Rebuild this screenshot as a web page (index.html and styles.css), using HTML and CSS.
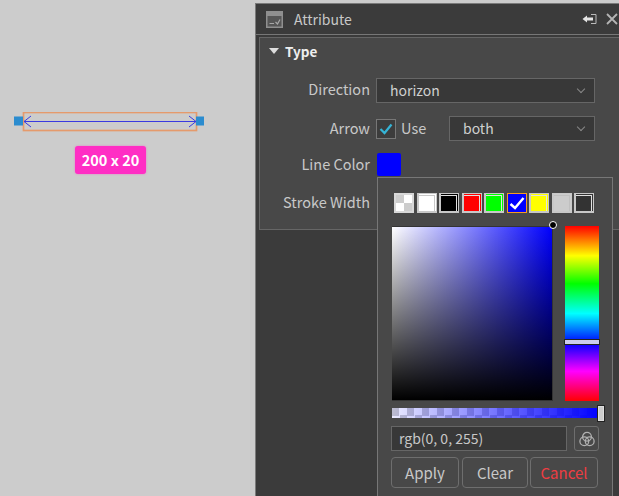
FILE: index.html
```html
<!DOCTYPE html>
<html lang="en">
<head>
    <meta charset="UTF-8">
    <meta name="viewport" content="width=device-width, initial-scale=1.0">
    <link rel="stylesheet" href="styles.css">
</head>
<body>
    <div class="canvas">
        <div class="shape">
            <svg width="192" height="20" viewBox="0 0 192 20">
                <rect x="9.5" y="0.5" width="173" height="18" fill="none" stroke="#e59a6c" stroke-width="1.7"/>
                <path d="M10 9.5H182M17 4L10 9.5L17 15M175 4L182 9.5L175 15" fill="none" stroke="#3a3ae0" stroke-width="1"/>
                <rect x="0" y="4.5" width="9" height="9" fill="#2b8ccf"/>
                <rect x="182" y="4.5" width="8" height="9" fill="#2b8ccf"/>
            </svg>
        </div>
        <div class="size-badge">200 x 20</div>
    </div>

    <div class="panel">
        <div class="panel-head">
            <svg class="head-icon" width="17" height="17" viewBox="0 0 17 17">
                <rect width="17" height="17" fill="#8f8f8f"/>
                <rect x="1.5" y="5" width="14" height="10.5" fill="#565656"/>
                <path d="M3.5 12.5H8M9.5 11L11.5 13L14 8.5" fill="none" stroke="#a8a8a8" stroke-width="1.2"/>
            </svg>
            <span class="head-title">Attribute</span>
            <svg class="head-btn" width="15" height="12" viewBox="0 0 15 12">
                <path d="M9 1.5H14V10.5H9" fill="none" stroke="#bbb" stroke-width="1"/>
                <path d="M0.5 6L5 2.5V4.5H11V7.5H5V9.5Z" fill="#e4e4e4"/>
            </svg>
            <svg class="head-btn" width="12" height="12" viewBox="0 0 12 12">
                <path d="M1 1L11 11M11 1L1 11" stroke="#b4b4b4" stroke-width="1.8"/>
            </svg>
        </div>

        <div class="section">
            <div class="section-title"><span class="caret"></span>Type</div>

            <div class="row row-direction">
                <label class="label">Direction</label>
                <div class="select select-wide">horizon<span class="chev"></span></div>
            </div>
            <div class="row row-arrow">
                <label class="label">Arrow</label>
                <span class="checkbox">
                    <svg width="14" height="12" viewBox="0 0 14 12"><path d="M1.5 6L5.5 10L12.5 1.5" fill="none" stroke="#35b4d6" stroke-width="2.2"/></svg>
                </span>
                <span class="use">Use</span>
                <div class="select select-small">both<span class="chev"></span></div>
            </div>
            <div class="row row-color">
                <label class="label">Line Color</label>
                <span class="color-btn"></span>
            </div>
            <div class="row row-stroke">
                <label class="label">Stroke Width</label>
            </div>
        </div>

        <div class="picker">
            <div class="swatches">
                <span class="swatch sw-transparent"></span>
                <span class="swatch sw-white"></span>
                <span class="swatch sw-black"></span>
                <span class="swatch sw-red"></span>
                <span class="swatch sw-green"></span>
                <span class="swatch sw-blue selected">
                    <svg width="16" height="14" viewBox="0 0 16 14"><path d="M1.5 8L6 12L14.5 2" fill="none" stroke="#fff" stroke-width="2.4"/></svg>
                </span>
                <span class="swatch sw-yellow"></span>
                <span class="swatch sw-gray"></span>
                <span class="swatch sw-dark"></span>
            </div>
            <div class="pick-main">
                <div class="sat-box"><span class="sat-handle"></span></div>
                <div class="hue-bar"><span class="hue-handle"></span></div>
            </div>
            <div class="alpha-bar"><span class="alpha-handle"></span></div>
            <div class="value-row">
                <div class="value-input">rgb(0, 0, 255)</div>
                <span class="mix-btn">
                    <svg width="18" height="18" viewBox="0 0 18 18" fill="none" stroke="#b0b0b0" stroke-width="1.3">
                        <circle cx="9" cy="6.8" r="4.4"/>
                        <circle cx="6.3" cy="11.2" r="4.4"/>
                        <circle cx="11.7" cy="11.2" r="4.4"/>
                    </svg>
                </span>
            </div>
            <div class="btn-row">
                <button class="btn btn-apply">Apply</button>
                <button class="btn btn-clear">Clear</button>
                <button class="btn btn-cancel">Cancel</button>
            </div>
        </div>
    </div>
</body>
</html>
```

FILE: styles.css
```css
body {
    font-family: "Noto Sans CJK KR", "Noto Sans", sans-serif;
    background-color: #cccccc;
    margin: 0;
    width: 619px;
    height: 496px;
    overflow: hidden;
    display: flex;
}

.canvas {
    width: 255px;
    flex: none;
    padding: 112px 0 0 14px;
    box-sizing: border-box;
}

.shape svg {
    display: block;
}

.size-badge {
    width: 71px;
    height: 28px;
    margin: 14px 0 0 61px;
    background-color: #ff2ec4;
    border-radius: 3px;
    color: #fff;
    font-size: 14.5px;
    font-weight: 700;
    line-height: 28px;
    text-align: center;
    box-shadow: 0 0 2px rgba(255, 46, 196, 0.6);
}

.panel {
    position: relative;
    width: 364px;
    flex: none;
    margin-top: 3px;
    background-color: #3b3b3b;
    border-top: 1px solid #7a7a7a;
    border-left: 1px solid #7a7a7a;
    box-sizing: border-box;
}

.panel-head {
    height: 30px;
    display: flex;
    align-items: center;
    padding-left: 10px;
    border-bottom: 1px solid #777;
    box-sizing: content-box;
}

.head-title {
    margin-left: 11px;
    flex: 1;
    color: #c8c8c8;
    font-size: 14px;
}

.head-btn {
    margin-right: 9px;
    flex: none;
}

.head-btn + .head-btn {
    margin-right: 1px;
}

.section {
    height: 193px;
    margin: 2px 0 0 3px;
    background-color: #484848;
    border: 1px solid #666;
    border-right: none;
    box-sizing: border-box;
}

.section-title {
    height: 26px;
    padding: 0 0 2px 9px;
    display: flex;
    align-items: center;
    color: #eee;
    font-size: 13.5px;
    font-weight: 700;
}

.caret {
    width: 0;
    height: 0;
    margin-right: 6px;
    border-left: 5px solid transparent;
    border-right: 5px solid transparent;
    border-top: 6px solid #ddd;
}

.row {
    display: flex;
    align-items: center;
    color: #c8c8c8;
    font-size: 14.5px;
}

.label {
    width: 110px;
    text-align: right;
    margin-right: 6px;
    padding-bottom: 2px;
    flex: none;
}

.row-direction {
    height: 25px;
    margin-top: 12px;
}

.row-direction .label {
    padding-bottom: 4px;
}

.row-arrow {
    height: 25px;
    margin-top: 13px;
}

.row-color {
    height: 23px;
    margin-top: 12px;
}

.row-stroke {
    height: 23px;
    margin-top: 15px;
}

.select {
    height: 25px;
    background-color: #383838;
    border: 1px solid #666;
    box-sizing: border-box;
    padding-left: 13px;
    font-size: 14px;
    line-height: 23px;
    color: #d0d0d0;
    position: relative;
}

.select-wide {
    width: 219px;
}

.select-small {
    width: 146px;
}

.chev {
    position: absolute;
    right: 10px;
    top: 7px;
    width: 5px;
    height: 5px;
    border-right: 1px solid #888;
    border-bottom: 1px solid #888;
    transform: rotate(45deg);
}

.checkbox {
    width: 20px;
    height: 20px;
    border: 1px solid #777;
    box-sizing: border-box;
    background-color: #3c3c3c;
    display: flex;
    align-items: center;
    justify-content: center;
    flex: none;
}

.use {
    width: 48px;
    margin-left: 5px;
    padding-bottom: 2px;
    flex: none;
}

.color-btn {
    width: 24px;
    height: 23px;
    background-color: #0000ff;
    border-radius: 2px;
    margin-left: 1px;
}

.picker {
    position: absolute;
    left: 121px;
    top: 173px;
    width: 236px;
    height: 330px;
    box-sizing: border-box;
    background-color: #484848;
    border: 1px solid #777;
    padding: 15px 0 0 14px;
}

.swatches {
    display: flex;
    gap: 2.5px;
    padding-left: 2px;
}

.swatch {
    width: 20px;
    height: 20px;
    box-sizing: border-box;
    border: 1px solid #c8c8c8;
    border-left-width: 2px;
    border-bottom-width: 2px;
    flex: none;
}

.sw-transparent {
    background: conic-gradient(#fff 0 25%, #ccc 0 50%, #fff 0 75%, #ccc 0);
    border: 2px solid #d8d8d8;
}

/* colour one px inside the frame, then a light line on top and right */
.sw-white { background-color: #fff; box-shadow: inset -1px 1px 0 #fff, inset -2px 2px 0 #c8c8c8; }
.sw-black { background-color: #000; box-shadow: inset -1px 1px 0 #000, inset -2px 2px 0 #e0e0e0; }
.sw-red { background-color: #f00; box-shadow: inset -1px 1px 0 #f00, inset -2px 2px 0 #e0e0e0; }
.sw-green { background-color: #0f0; box-shadow: inset -1px 1px 0 #0f0, inset -2px 2px 0 #e0e0e0; }
.sw-yellow { background-color: #ff0; box-shadow: inset -1px 1px 0 #ff0, inset -2px 2px 0 #e0e0e0; }
.sw-gray { background-color: #ccc; box-shadow: inset -1px 1px 0 #ccc, inset -2px 2px 0 #c0c0c0; }
.sw-dark { background-color: #333; box-shadow: inset -1px 1px 0 #333, inset -2px 2px 0 #e0e0e0; }

.sw-blue {
    background-color: #00f;
    border: 1px solid #f59a23;
    display: flex;
    align-items: center;
    justify-content: center;
}

.pick-main {
    display: flex;
    margin-top: 13px;
    height: 175px;
}

.sat-box {
    position: relative;
    width: 161px;
    height: 175px;
    border: 1px solid #333;
    border-left: none;
    box-sizing: border-box;
    background: linear-gradient(to top, #000, transparent), linear-gradient(to right, #fff, #00f);
}

.sat-handle {
    position: absolute;
    right: -5px;
    top: -6px;
    width: 8px;
    height: 8px;
    box-sizing: border-box;
    background-color: #000;
    border: 1.5px solid #fff;
    border-radius: 50%;
}

.hue-bar {
    position: relative;
    width: 34px;
    height: 175px;
    margin-left: 12px;
    background: linear-gradient(to bottom, #f00, #ff0 17%, #0f0 33%, #0ff 50%, #00f 67%, #f0f 83%, #f00);
}

.hue-handle {
    position: absolute;
    left: -1px;
    top: 113px;
    width: 36px;
    height: 6px;
    box-sizing: border-box;
    background-color: #ccccee;
    border: 1px solid #222;
}

.alpha-bar {
    position: relative;
    width: 207px;
    height: 10px;
    margin-top: 7px;
    background: linear-gradient(to right, rgba(0, 0, 255, 0.08), #00f),
        repeating-conic-gradient(#fff 0 25%, #ccc 0 50%) 0 0 / 15px 15px;
}

.alpha-handle {
    position: absolute;
    right: -6px;
    top: -3px;
    width: 8px;
    height: 17px;
    box-sizing: border-box;
    background-color: #ccc;
    border: 1px solid #222;
    outline: 1px solid #ddd;
    outline-offset: -2px;
}

.value-row {
    display: flex;
    margin-top: 8px;
    margin-left: -1px;
}

.value-input {
    width: 176px;
    height: 25px;
    box-sizing: border-box;
    background-color: #383838;
    border: 1px solid #666;
    padding-left: 7px;
    line-height: 22px;
    color: #c8c8c8;
    font-size: 14px;
}

.mix-btn {
    width: 25px;
    height: 25px;
    box-sizing: border-box;
    border: 1px solid #6e6e6e;
    border-radius: 3px;
    margin-left: 7px;
    display: flex;
    align-items: center;
    justify-content: center;
}

.btn-row {
    display: flex;
    gap: 3px;
    margin-top: 6px;
    margin-left: -1px;
}

.btn {
    height: 31px;
    padding: 0;
    background-color: #484848;
    border: 1px solid #6e6e6e;
    border-radius: 4px;
    color: #c8c8c8;
    font-family: inherit;
    font-size: 15px;
}

.btn-apply { width: 68px; }
.btn-clear { width: 66px; }
.btn-cancel { width: 68px; margin-left: -1px; color: #ee3d42; }
```
